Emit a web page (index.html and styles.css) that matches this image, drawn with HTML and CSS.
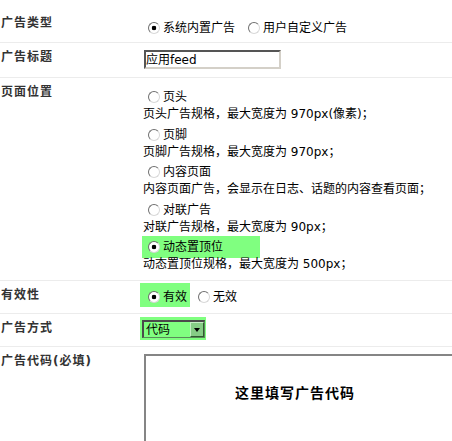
FILE: index.html
```html
<!DOCTYPE html>
<html lang="zh-CN">
<head>
<meta charset="utf-8">
<title>广告设置</title>
<link rel="stylesheet" href="styles.css">
</head>
<body>
<div class="form">
  <div class="row r1">
    <div class="lbl">广告类型</div>
    <div class="val">
      <div class="line">
        <label class="rb"><span class="radio on"></span>系统内置广告</label>
        <label class="rb rb-gap"><span class="radio"></span>用户自定义广告</label>
      </div>
    </div>
  </div>
  <div class="row r2">
    <div class="lbl">广告标题</div>
    <div class="val">
      <div class="inp">应用feed</div>
    </div>
  </div>
  <div class="row r3">
    <div class="lbl">页面位置</div>
    <div class="val opts">
      <div class="ol"><label class="rb"><span class="radio"></span>页头</label></div>
      <div class="desc">页头广告规格，最大宽度为 970px(像素)；</div>
      <div class="ol"><label class="rb"><span class="radio"></span>页脚</label></div>
      <div class="desc">页脚广告规格，最大宽度为 970px；</div>
      <div class="ol"><label class="rb"><span class="radio"></span>内容页面</label></div>
      <div class="desc">内容页面广告，会显示在日志、话题的内容查看页面；</div>
      <div class="ol"><label class="rb"><span class="radio"></span>对联广告</label></div>
      <div class="desc">对联广告规格，最大宽度为 90px；</div>
      <div class="ol"><label class="rb hl"><span class="radio on"></span>动态置顶位</label></div>
      <div class="desc">动态置顶位规格，最大宽度为 500px；</div>
    </div>
  </div>
  <div class="row r4">
    <div class="lbl">有效性</div>
    <div class="val">
      <div class="line">
        <label class="rb hl2"><span class="radio on"></span>有效</label>
        <label class="rb rb-gap2"><span class="radio"></span>无效</label>
      </div>
    </div>
  </div>
  <div class="row r5">
    <div class="lbl">广告方式</div>
    <div class="val">
      <div class="selwrap">
        <div class="sel"><span class="seltext">代码</span><span class="btn"><span class="arrow"></span></span></div>
      </div>
    </div>
  </div>
  <div class="row r6">
    <div class="lbl">广告代码(必填)</div>
    <div class="val">
      <div class="code">这里填写广告代码</div>
    </div>
  </div>
</div>
</body>
</html>
```
FILE: styles.css
```css
html, body {
  margin: 0;
  padding: 0;
  overflow: hidden;
  background: #fff;
}
body {
  width: 452px;
  height: 441px;
  font-family: "DejaVu Sans", "Noto Sans CJK SC", sans-serif;
  font-size: 12px;
  line-height: 18px;
  color: #000;
}
.row {
  display: flex;
  border-bottom: 1px solid #ececec;
}
.r6 { border-bottom: none; }
.lbl {
  width: 140px;
  flex: none;
  box-sizing: border-box;
  padding: 5px 0 0 1px;
  font-weight: bold;
  color: #333;
  letter-spacing: 1px;
  white-space: nowrap;
}
.val {
  flex: 1;
  min-width: 0;
}
/* row 1 */
.r1 { height: 42px; }
.r1 .lbl { padding-top: 14px; }
.r1 .val { padding-top: 19px; }
.line {
  display: flex;
  align-items: center;
  height: 18px;
}
.rb {
  display: inline-flex;
  align-items: center;
  white-space: nowrap;
  flex: none;
}
.r1 .line { padding-left: 8px; }
.rb-gap { margin-left: 13px; }
.radio {
  width: 12px;
  height: 12px;
  box-sizing: border-box;
  border-radius: 50%;
  border: 1px solid;
  border-color: #6f6f6f #d8d8d8 #d8d8d8 #6f6f6f;
  background: #fff;
  margin-right: 3px;
  flex: none;
}
.radio.on {
  background: radial-gradient(circle, #000 0, #000 2px, #fff 2.6px);
}
/* row 2 */
.r2 { height: 34px; }
.r2 .val { padding-top: 7px; }
.inp {
  margin-left: 4px;
  width: 137px;
  height: 19px;
  box-sizing: border-box;
  border: 2px solid;
  border-color: #555 #d4d0c8 #d4d0c8 #555;
  padding-left: 0;
  line-height: 16px;
  white-space: nowrap;
}
/* row 3 */
.r3 { height: 202px; }
.opts { padding-top: 7px; }
.ol {
  display: flex;
  align-items: center;
  height: 18px;
  margin-top: 3px;
  padding-left: 8px;
}
.desc {
  line-height: 16.5px;
  padding-left: 3px;
  white-space: nowrap;
}
.hl {
  background: #80ff80;
  width: 118px;
  height: 22px;
  box-sizing: border-box;
  margin-left: -6px;
  padding-left: 6px;
}
/* row 4 */
.r4 { height: 32px; }
.r4 .val { padding-top: 2px; }
.r4 .line { height: 24px; }
.hl2 {
  background: #80ff80;
  height: 24px;
  box-sizing: border-box;
  padding: 5px 3px 1px 8px;
}
.rb-gap2 { margin-left: 8px; padding-top: 4px; }
/* row 5 */
.r5 { height: 32px; }
.r5 .val { padding-top: 3px; }
.selwrap {
  background: #80ff80;
  width: 66px;
  height: 23px;
  box-sizing: border-box;
  padding: 3px 0 0 2px;
}
.sel {
  width: 63px;
  height: 18px;
  box-sizing: border-box;
  border-style: solid;
  border-width: 2px 1px 1px 2px;
  border-color: #4a4a4a #5a8a5a #5a8a5a #4a4a4a;
  display: flex;
  align-items: stretch;
}
.seltext {
  padding-left: 2px;
  line-height: 16px;
  flex: 1;
}
.btn {
  width: 14px;
  flex: none;
  box-sizing: border-box;
  background: #86cc86;
  border: 1px solid;
  border-color: #c4eec4 #2f5a2f #2f5a2f #c4eec4;
  display: flex;
  align-items: center;
  justify-content: center;
}
.arrow {
  width: 0;
  height: 0;
  border-left: 3.5px solid transparent;
  border-right: 3.5px solid transparent;
  border-top: 4px solid #000;
}
/* row 6 */
.r6 .val { padding-top: 7px; }
.code {
  margin-left: 4px;
  width: 340px;
  height: 110px;
  box-sizing: border-box;
  border-top: 2px solid #858585;
  border-left: 2px solid #858585;
  padding: 27px 0 0 89px;
  font-size: 14px;
  font-weight: bold;
  line-height: 20px;
  letter-spacing: 1px;
  white-space: nowrap;
}
```
